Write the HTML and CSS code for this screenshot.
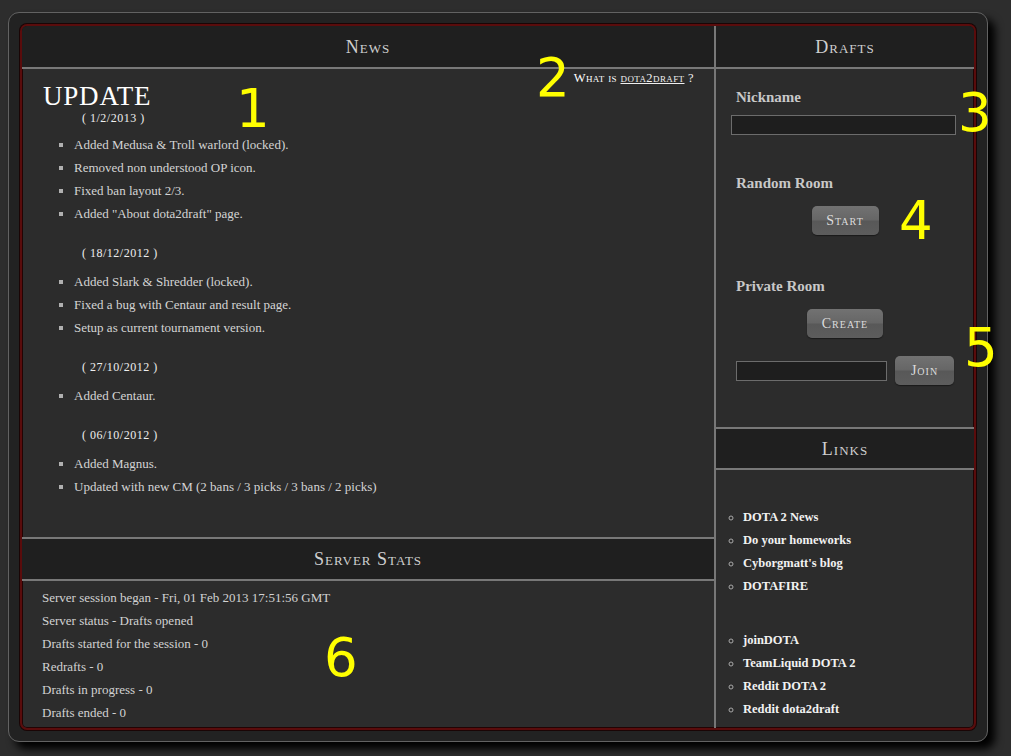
FILE: index.html
```html
<!DOCTYPE html>
<html>
<head>
<meta charset="utf-8">
<title>dota2draft</title>
<link rel="stylesheet" href="styles.css">
</head>
<body>
<div class="frame">
  <div class="inner">
    <div class="left">
      <div class="head">News</div>
      <div class="news">
        <div class="about"><b>What is</b> <a href="#">dota2draft</a> ?</div>
        <h2 class="update">UPDATE</h2>
        <p class="date date-first">( 1/2/2013 )</p>
        <ul class="changes">
          <li>Added Medusa &amp; Troll warlord (locked).</li>
          <li>Removed non understood OP icon.</li>
          <li>Fixed ban layout 2/3.</li>
          <li>Added "About dota2draft" page.</li>
        </ul>
        <p class="date">( 18/12/2012 )</p>
        <ul class="changes">
          <li>Added Slark &amp; Shredder (locked).</li>
          <li>Fixed a bug with Centaur and result page.</li>
          <li>Setup as current tournament version.</li>
        </ul>
        <p class="date">( 27/10/2012 )</p>
        <ul class="changes">
          <li>Added Centaur.</li>
        </ul>
        <p class="date">( 06/10/2012 )</p>
        <ul class="changes">
          <li>Added Magnus.</li>
          <li>Updated with new CM (2 bans / 3 picks / 3 bans / 2 picks)</li>
        </ul>
      </div>
      <div class="head head-mid">Server Stats</div>
      <div class="stats">
        <p>Server session began - Fri, 01 Feb 2013 17:51:56 GMT</p>
        <p>Server status - Drafts opened</p>
        <p>Drafts started for the session - 0</p>
        <p>Redrafts - 0</p>
        <p>Drafts in progress - 0</p>
        <p>Drafts ended - 0</p>
      </div>
    </div>
    <div class="right">
      <div class="head">Drafts</div>
      <div class="drafts">
        <div class="label label-first">Nickname</div>
        <input class="field field-nick" type="text">
        <div class="label label-random">Random Room</div>
        <button class="btn btn-start">Start</button>
        <div class="label label-private">Private Room</div>
        <button class="btn btn-create">Create</button>
        <div class="join-row">
          <input class="field field-room" type="text">
          <button class="btn btn-join">Join</button>
        </div>
      </div>
      <div class="head head-mid head-links">Links</div>
      <div class="links">
        <ul class="linklist">
          <li><a href="#">DOTA 2 News</a></li>
          <li><a href="#">Do your homeworks</a></li>
          <li><a href="#">Cyborgmatt's blog</a></li>
          <li><a href="#">DOTAFIRE</a></li>
        </ul>
        <ul class="linklist linklist-second">
          <li><a href="#">joinDOTA</a></li>
          <li><a href="#">TeamLiquid DOTA 2</a></li>
          <li><a href="#">Reddit DOTA 2</a></li>
          <li><a href="#">Reddit dota2draft</a></li>
        </ul>
      </div>
    </div>
  </div>
</div>
<div class="mark mark-1">1</div>
<div class="mark mark-2">2</div>
<div class="mark mark-3">3</div>
<div class="mark mark-4">4</div>
<div class="mark mark-5">5</div>
<div class="mark mark-6">6</div>
</body>
</html>
```
FILE: styles.css
```css
html, body {
  margin: 0;
  padding: 0;
}
body {
  width: 1011px;
  height: 756px;
  overflow: hidden;
  background: #2d2d2d;
  font-family: "Liberation Serif", "Times New Roman", serif;
  position: relative;
}
.frame {
  box-sizing: border-box;
  margin: 12px 0 0 8px;
  width: 980px;
  height: 730px;
  padding: 11px;
  background: #222222;
  border: 1px solid #626262;
  border-radius: 11px;
  box-shadow: 7px 7px 9px #000;
}
.inner {
  box-sizing: border-box;
  width: 956px;
  height: 706px;
  border: 2px solid #5a0c0c;
  border-radius: 7px;
  box-shadow: 0 0 0 1px #1a0505, inset 0 0 0 1px #220404;
  background: #2c2c2c;
  display: flex;
  overflow: hidden;
}
.left {
  width: 692px;
  border-right: 2px solid #777;
  display: flex;
  flex-direction: column;
}
.right {
  flex: 1;
  display: flex;
  flex-direction: column;
}
.head {
  height: 41px;
  line-height: 42px;
  background: #1f1f1f;
  border-bottom: 2px solid #787878;
  text-align: center;
  color: #cfcfcf;
  font-size: 18px;
  font-variant: small-caps;
  letter-spacing: 1px;
  flex: none;
}
.head-mid {
  height: 40px;
  line-height: 41px;
  border-top: 2px solid #787878;
}
.head-links {
  height: 39px;
  line-height: 40px;
}
.news {
  height: 468px;
  box-sizing: border-box;
  padding: 1px 20px 0 0;
  color: #d4d4d4;
  font-size: 13px;
}
.about {
  text-align: right;
  line-height: 16px;
  font-size: 12.5px;
  font-variant: small-caps;
  letter-spacing: 0.4px;
  color: #f0f0f0;
}
.about b {
  font-weight: normal;
  color: #ffffff;
}
.about a {
  color: #f0f0f0;
  text-decoration: underline;
}
.update {
  margin: 0 0 0 21px;
  font-size: 27px;
  line-height: 20px;
  font-weight: normal;
  color: #ffffff;
  letter-spacing: 0.8px;
}
.date {
  margin: 0 0 7px 60px;
  line-height: 19px;
  font-size: 12px;
  letter-spacing: 0.5px;
  color: #eeeeee;
}
.date-first {
  margin-top: 3px;
  margin-bottom: 5px;
}
.changes {
  margin: 0 0 19px 0;
  padding-left: 52px;
  list-style: square;
  line-height: 23px;
}
.changes li::marker {
  color: #b0b0b0;
}
.stats {
  flex: 1;
  padding: 5px 0 0 20px;
  color: #d2d2d2;
  font-size: 13px;
}
.stats p {
  margin: 0;
  line-height: 23px;
}
.drafts {
  height: 358px;
  box-sizing: border-box;
  padding-top: 18px;
}
.label {
  margin-left: 20px;
  line-height: 20px;
  font-size: 15px;
  font-weight: bold;
  color: #c8c8c8;
}
.label-random {
  margin-top: 38px;
}
.label-private {
  margin-top: 41px;
}
.field {
  box-sizing: border-box;
  height: 20px;
  background: #1e1e1e;
  border: 1px solid #6c6c6c;
  padding: 0;
  outline: none;
}
.field-nick {
  display: block;
  margin: 8px 0 0 15px;
  width: 225px;
}
.btn {
  display: block;
  height: 29px;
  border: none;
  border-radius: 5px;
  background: linear-gradient(to bottom, #727272 0%, #666666 48%, #585858 52%, #5d5d5d 100%);
  box-shadow: 0 1px 1px #1a1a1a;
  color: #dddddd;
  font-family: "Liberation Serif", "Times New Roman", serif;
  font-size: 14px;
  font-variant: small-caps;
  letter-spacing: 1px;
  padding: 0;
}
.btn-start {
  width: 67px;
  margin: 13px auto 0;
}
.btn-create {
  width: 76px;
  margin: 13px auto 0;
}
.join-row {
  display: flex;
  align-items: center;
  margin: 18px 0 0 20px;
  gap: 8px;
}
.field-room {
  width: 151px;
}
.btn-join {
  width: 59px;
}
.links {
  flex: 1;
  padding-top: 36px;
}
.linklist {
  margin: 0;
  padding-left: 27px;
  list-style: circle;
  line-height: 23px;
  font-size: 12.5px;
  font-weight: bold;
}
.linklist li::marker {
  color: #a8a8a8;
}
.linklist a {
  color: #f2f2f2;
  text-decoration: none;
}
.linklist-second {
  margin-top: 31px;
}
.mark {
  position: absolute;
  font-family: "DejaVu Sans", sans-serif;
  font-size: 53px;
  line-height: 53px;
  color: #ffff00;
}
.mark-1 { left: 236px; top: 82px; }
.mark-2 { left: 536px; top: 51px; }
.mark-3 { left: 958px; top: 86px; }
.mark-4 { left: 899px; top: 194px; }
.mark-5 { left: 964px; top: 321px; }
.mark-6 { left: 324px; top: 631px; }
```
